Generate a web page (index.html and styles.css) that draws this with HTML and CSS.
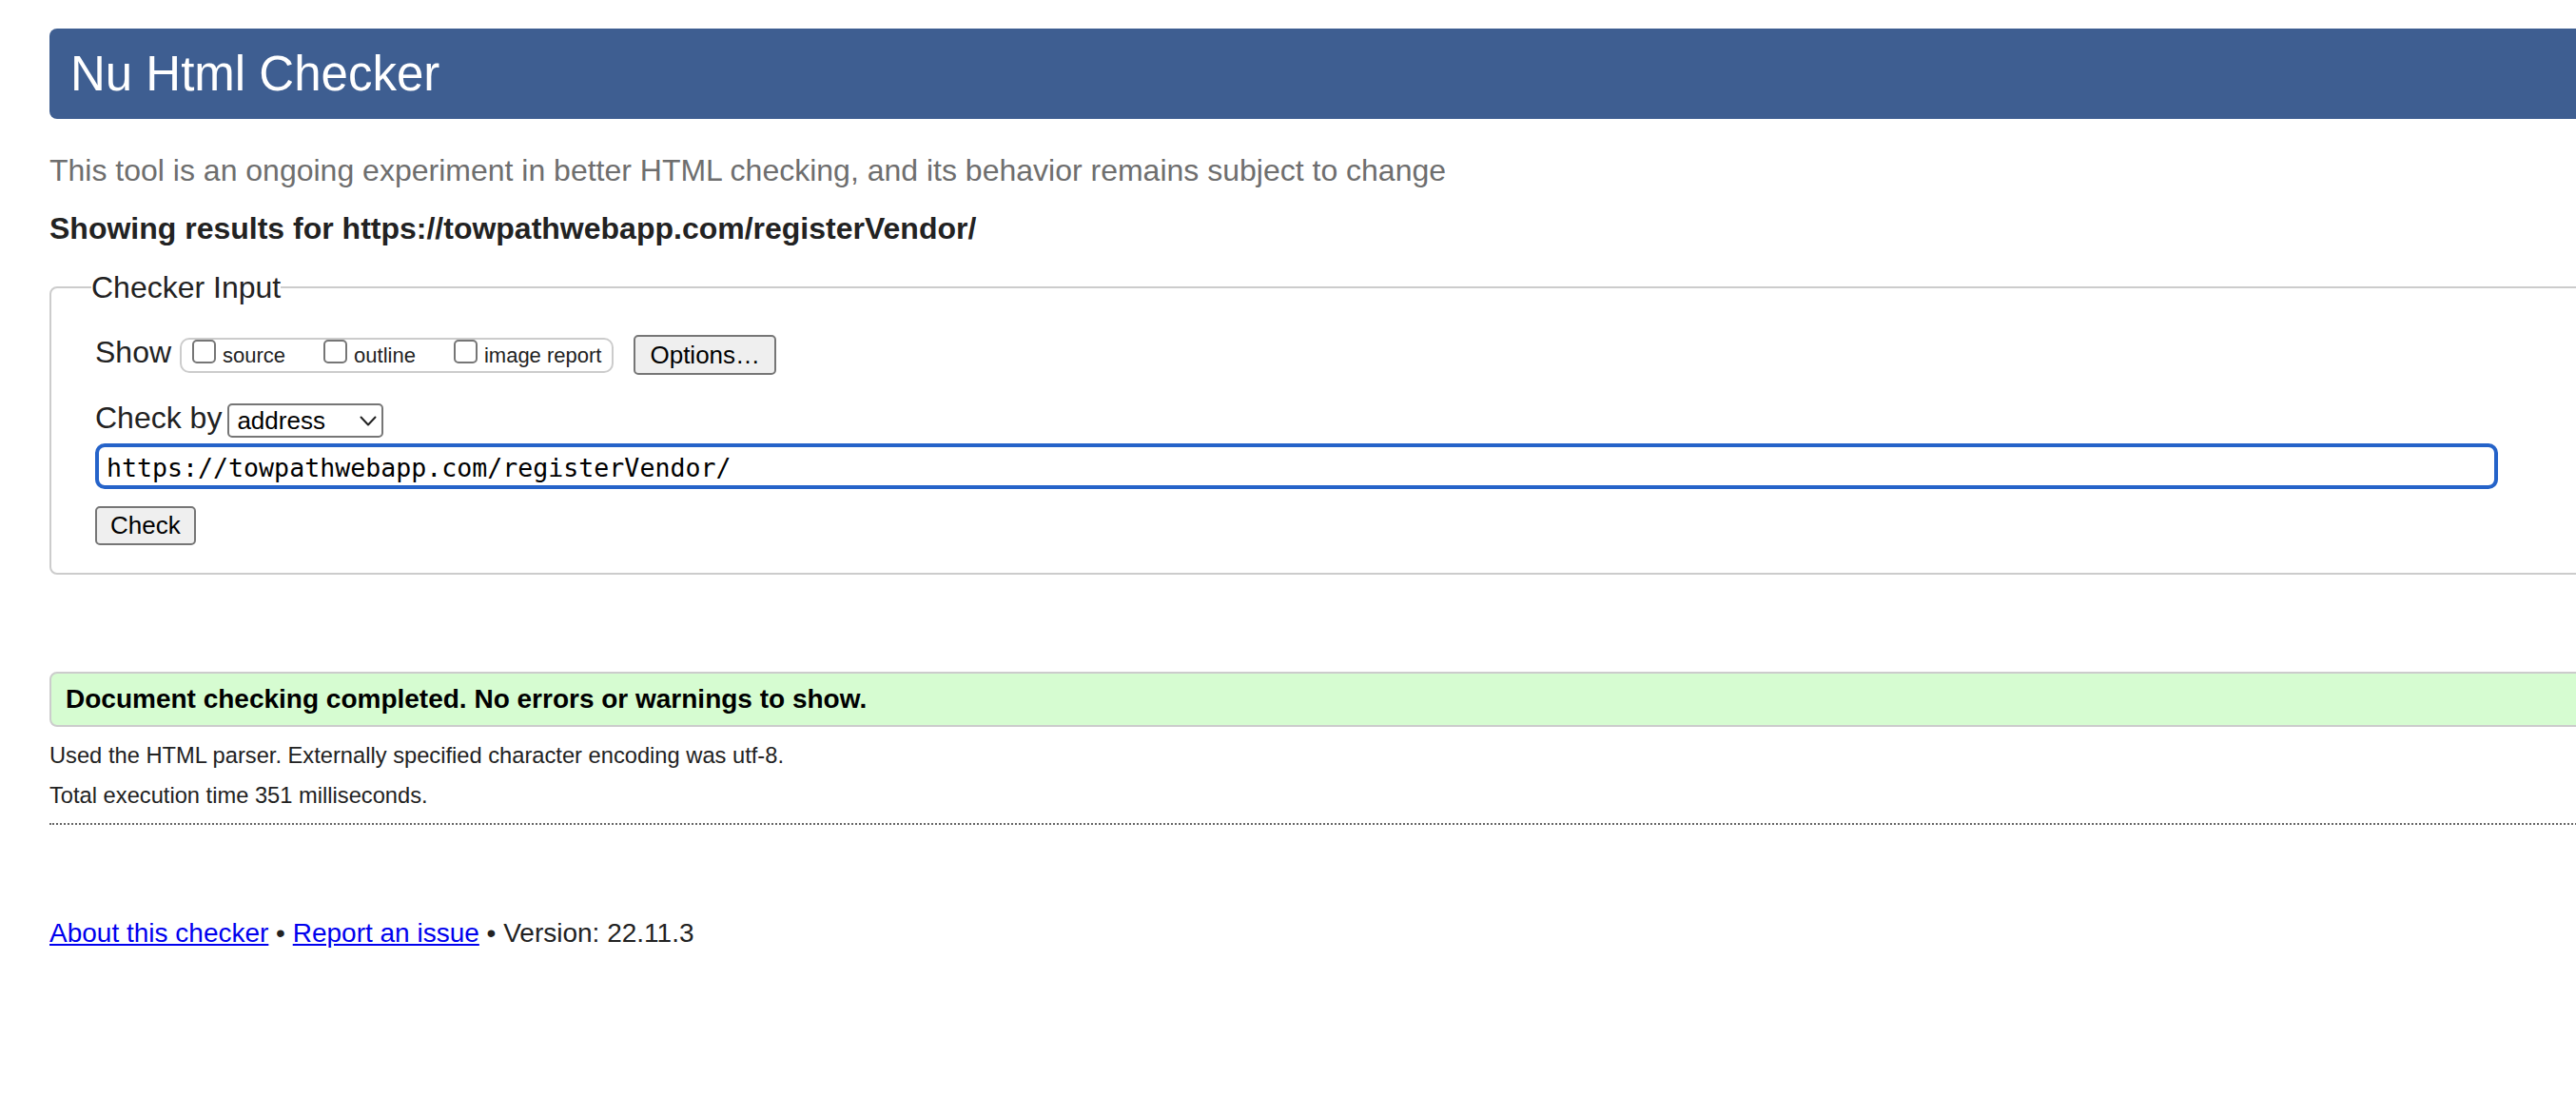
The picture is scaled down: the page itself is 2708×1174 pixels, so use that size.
FILE: index.html
```html
<!DOCTYPE html>
<html lang="en">
<head>
<meta charset="utf-8">
<title>Showing results for https://towpathwebapp.com/registerVendor/ - Nu Html Checker</title>
<link rel="stylesheet" href="styles.css">
</head>
<body>
<div class="page">
  <h1 class="banner">Nu Html Checker</h1>
  <p class="tagline">This tool is an ongoing experiment in better HTML checking, and its behavior remains subject to change</p>
  <h2 class="results-for">Showing results for https://towpathwebapp.com/registerVendor/</h2>

  <form class="checker-form" action="#">
    <fieldset class="checker-input">
      <legend class="legend">Checker Input</legend>
      <div class="fields">
        <div class="row show-row">
          <span class="row-label">Show</span>
          <span class="options-group">
            <label class="opt"><span class="box"></span><span class="opt-text">source</span></label>
            <label class="opt"><span class="box"></span><span class="opt-text">outline</span></label>
            <label class="opt"><span class="box"></span><span class="opt-text">image report</span></label>
          </span>
          <button type="button" class="btn options-btn">Options…</button>
        </div>
        <div class="row by-row">
          <span class="row-label">Check by</span>
          <span class="select">
            <span class="select-value">address</span>
            <svg class="chevron" width="18" height="11" viewBox="0 0 18 11"><path d="M1.5 1.5 L9 9.5 L16.5 1.5" fill="none" stroke="#222" stroke-width="2" stroke-linecap="round" stroke-linejoin="round"/></svg>
          </span>
        </div>
        <input class="url" type="text" value="https://towpathwebapp.com/registerVendor/">
        <button type="button" class="btn check-btn">Check</button>
      </div>
    </fieldset>
  </form>

  <div class="result">Document checking completed. No errors or warnings to show.</div>

  <div class="details">
    <p class="detail">Used the HTML parser. Externally specified character encoding was utf-8.</p>
    <p class="detail detail-second">Total execution time 351 milliseconds.</p>
  </div>

  <p class="footer"><a href="#">About this checker</a> • <a href="#">Report an issue</a> • Version: 22.11.3</p>
</div>
</body>
</html>
```

FILE: styles.css
```css
html {
  overflow: hidden;
}

body {
  margin: 0;
  background: #fff;
  color: #222;
  font-family: "Liberation Sans", Arial, Helvetica, sans-serif;
}

.page {
  width: 2760px;
  padding: 30px 0 40px 52px;
}

.banner {
  margin: 0;
  height: 95px;
  padding-left: 22px;
  background: #3e5e91;
  color: #fff;
  border-radius: 8px;
  font-size: 51px;
  font-weight: normal;
  line-height: 95px;
}

.tagline {
  margin: 34px 0 0;
  font-size: 32px;
  line-height: 40px;
  color: #6e6e6e;
}

.results-for {
  margin: 21px 0 0;
  font-size: 32px;
  line-height: 40px;
  font-weight: bold;
  color: #222;
}

.checker-form {
  margin: 0;
}

.checker-input {
  margin: 22px 0 0;
  padding: 28px 0 29px 0;
  border: 2px solid #ccc;
  border-radius: 8px;
  min-width: 0;
}

.legend {
  margin-left: 42px;
  padding: 0;
  font-size: 32px;
  line-height: 40px;
  color: #222;
}

.fields {
  padding-left: 46px;
}

.row {
  display: flex;
  align-items: flex-start;
}

.row-label {
  font-size: 32px;
  line-height: 40px;
  color: #222;
}

.show-row .row-label {
  margin-right: 9px;
}

.options-group {
  display: flex;
  align-items: flex-start;
  margin-top: 5px;
  height: 37px;
  box-sizing: border-box;
  border: 2px solid #ccc;
  border-radius: 10px;
  padding: 0 11px;
}

.opt {
  display: flex;
  align-items: flex-start;
  font-size: 22px;
  line-height: 33px;
  color: #222;
}

.opt + .opt {
  margin-left: 40px;
}

.box {
  width: 25px;
  height: 25px;
  box-sizing: border-box;
  border: 2px solid #767676;
  border-radius: 5px;
  margin-right: 7px;
  background: #fff;
}

.btn {
  box-sizing: border-box;
  border: 2px solid #767676;
  border-radius: 5px;
  background: #efefef;
  color: #000;
  font-family: "Liberation Sans", Arial, Helvetica, sans-serif;
  font-size: 26px;
  margin: 0;
}

.options-btn {
  margin-left: 21px;
  margin-top: 2px;
  height: 42px;
  padding: 0 15px;
  line-height: 38px;
}

.by-row {
  margin-top: 25px;
}

.by-row .row-label {
  margin-right: 6px;
}

.select {
  display: flex;
  align-items: center;
  justify-content: space-between;
  margin-top: 5px;
  width: 164px;
  height: 36px;
  box-sizing: border-box;
  border: 2px solid #767676;
  border-radius: 5px;
  padding: 0 5px 0 8px;
  font-size: 26px;
  line-height: 32px;
  color: #000;
  background: #fff;
}

.chevron {
  display: block;
}

.url {
  display: block;
  margin: 6px 0 0;
  width: 2526px;
  height: 48px;
  box-sizing: border-box;
  border: 4px solid #2563c9;
  border-radius: 10px;
  padding: 2px 8px 0;
  font-family: "DejaVu Sans Mono", "Liberation Mono", monospace;
  font-size: 26.6px;
  line-height: 38px;
  color: #000;
  background: #fff;
  outline: none;
}

.check-btn {
  display: block;
  margin-top: 18px;
  height: 41px;
  padding: 0 14px;
  line-height: 37px;
}

.result {
  margin-top: 102px;
  height: 58px;
  box-sizing: border-box;
  border: 2px solid #ccc;
  border-radius: 8px;
  background: #d6fcd1;
  padding-left: 15px;
  font-size: 28px;
  font-weight: bold;
  line-height: 54px;
  color: #000;
}

.details {
  padding-bottom: 14px;
  border-bottom: 2px dotted #666;
}

.detail {
  margin: 15px 0 0;
  font-size: 23.7px;
  line-height: 30px;
  color: #222;
}

.detail-second {
  margin-top: 12px;
}

.footer {
  margin: 97px 0 0;
  font-size: 28px;
  line-height: 34px;
  color: #222;
}

.footer a {
  color: #0000ee;
  text-decoration: underline;
}
```
